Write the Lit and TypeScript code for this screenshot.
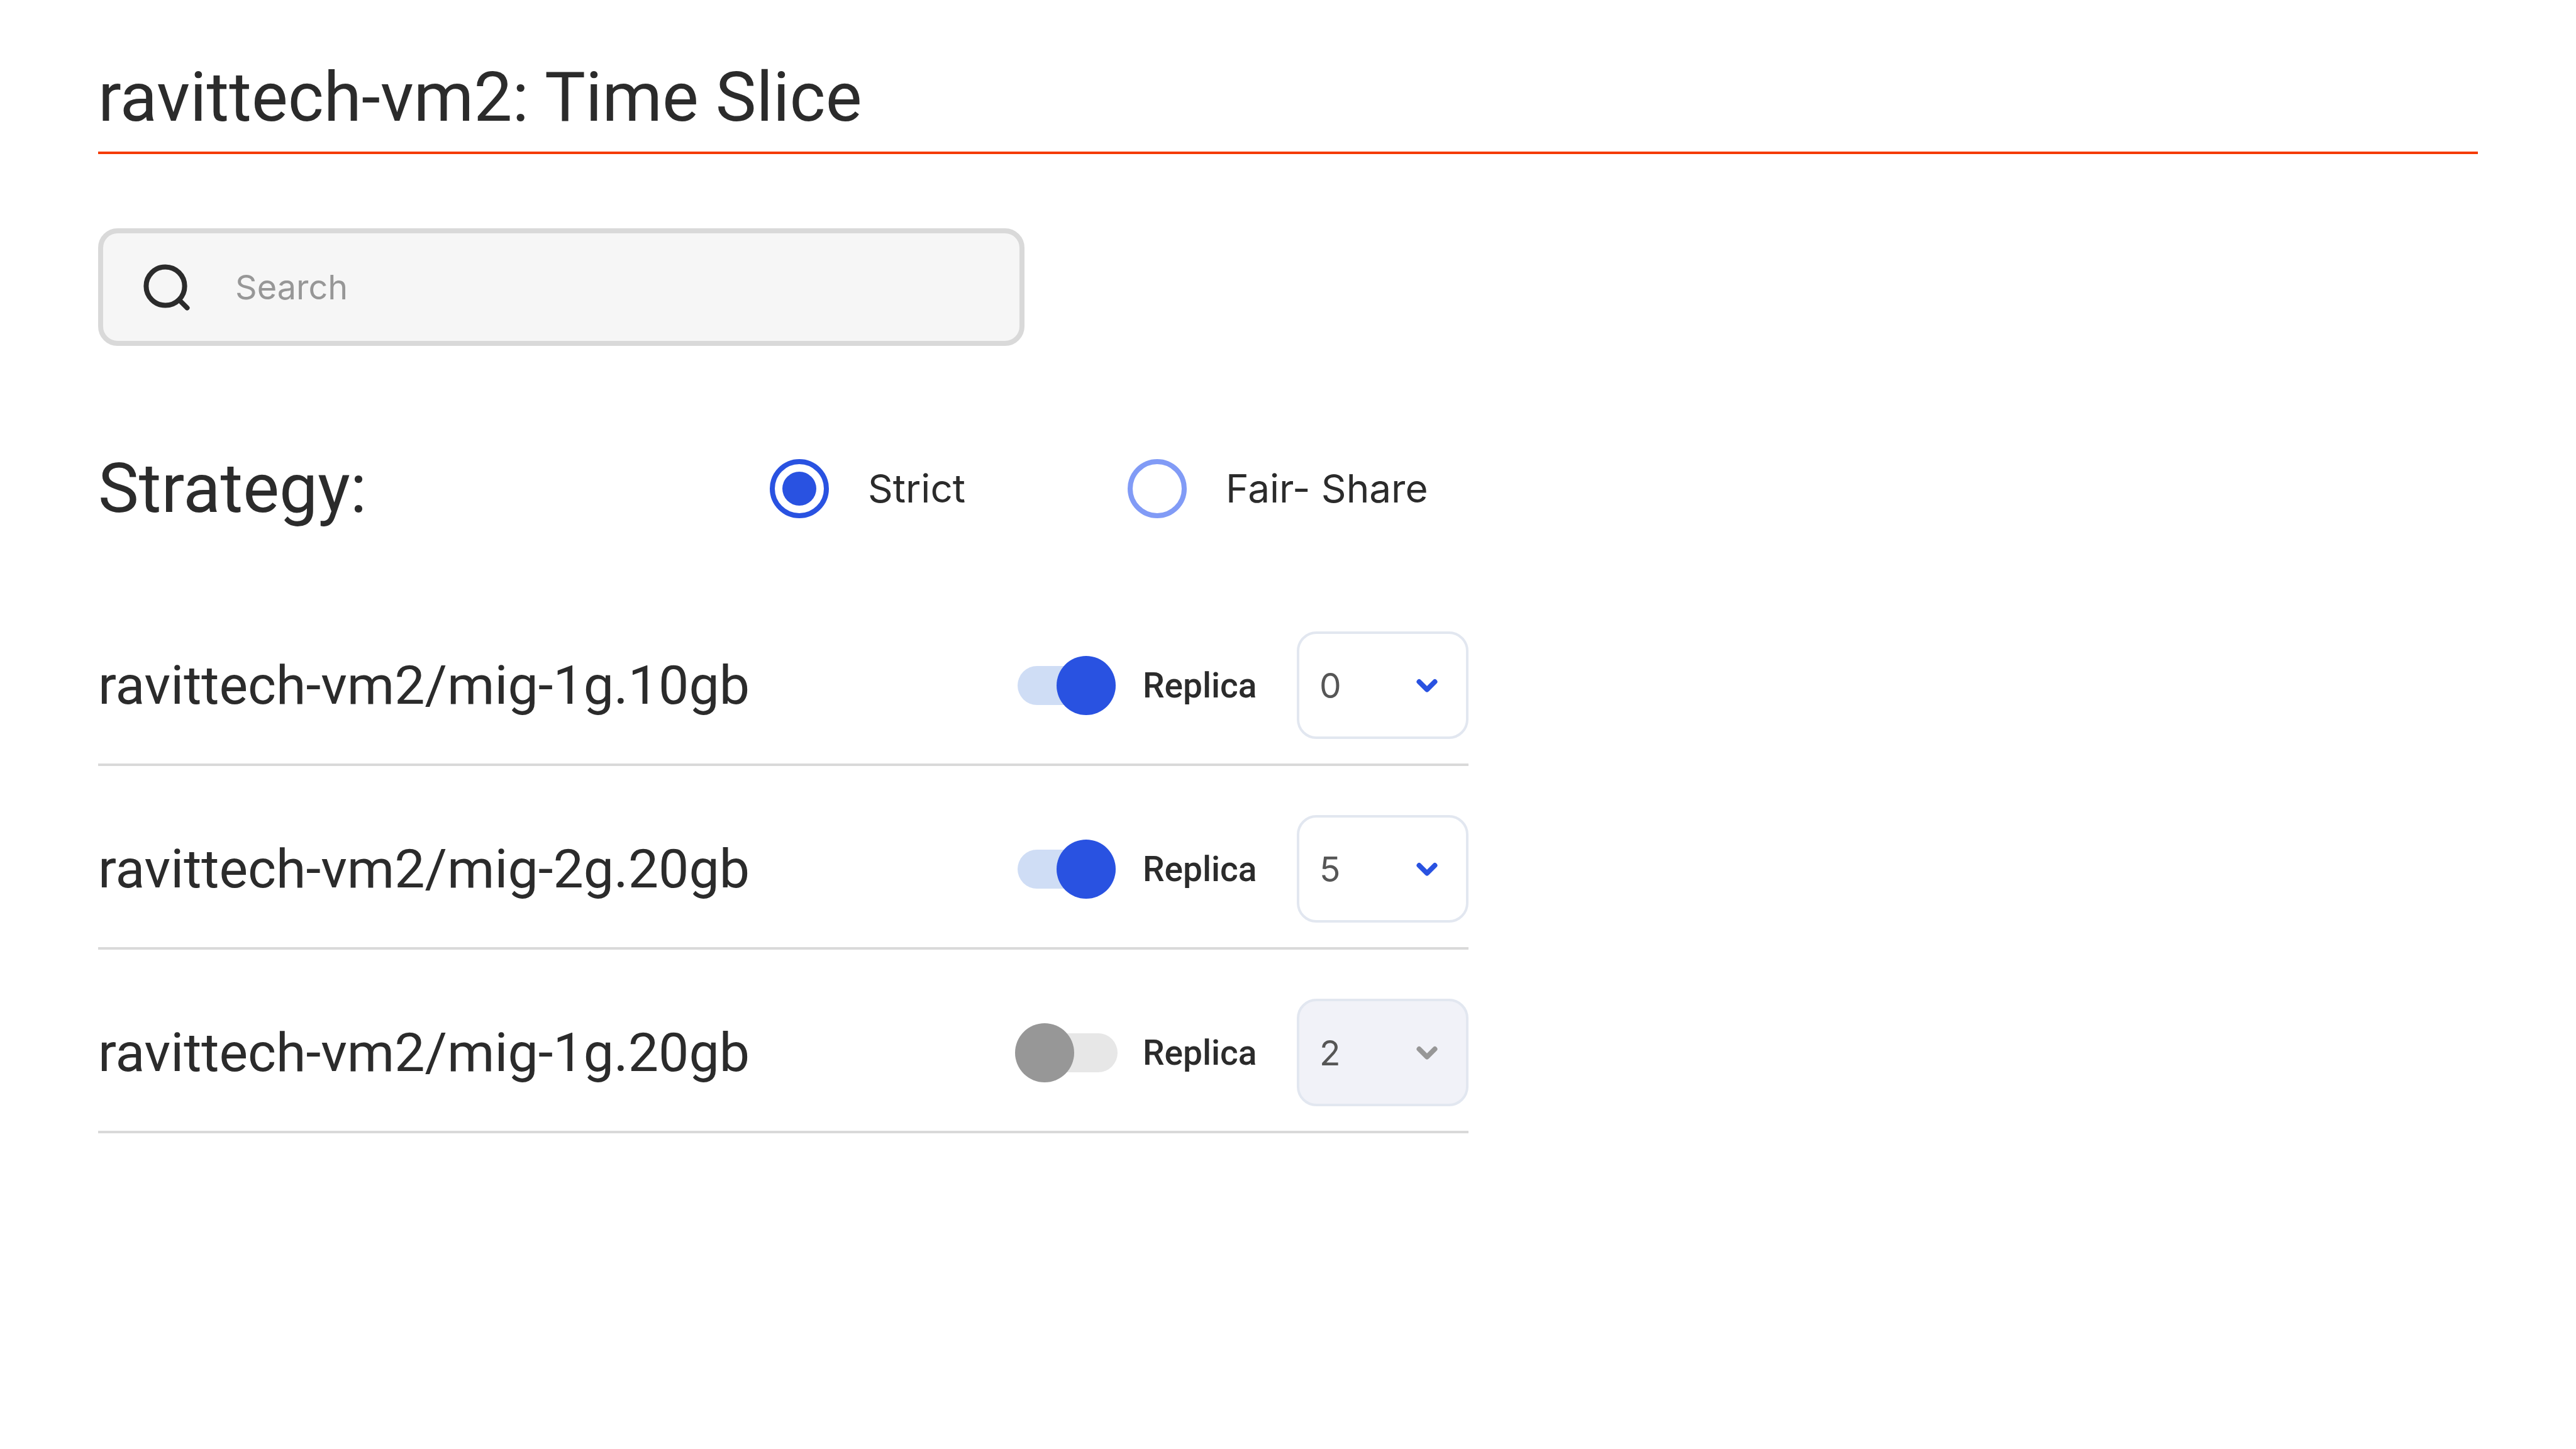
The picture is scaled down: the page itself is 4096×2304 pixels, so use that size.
import { LitElement, html, css, svg } from "lit";
import { customElement, state } from "lit/decorators.js";

interface Profile {
  name: string;
  enabled: boolean;
  replicas: number;
}

@customElement("app-root")
export class AppRoot extends LitElement {
  @state() private strategy = "strict";
  @state() private profiles: Profile[] = [
    { name: "ravittech-vm2/mig-1g.10gb", enabled: true, replicas: 0 },
    { name: "ravittech-vm2/mig-2g.20gb", enabled: true, replicas: 5 },
    { name: "ravittech-vm2/mig-1g.20gb", enabled: false, replicas: 2 },
  ];

  static styles = css`
    :host {
      display: block;
      min-height: 100vh;
      box-sizing: border-box;
      padding: 91px 156px;
      background: #ffffff;
      color: #2b2b2b;
      font-family: Roboto, "Liberation Sans", sans-serif;
    }
    * {
      box-sizing: border-box;
    }
    .title,
    .legend {
      margin: 0;
      font-size: 109px;
      line-height: 128px;
      font-weight: 400;
    }
    .title {
      padding-bottom: 22px;
      border-bottom: 4px solid #f53b03;
    }
    .search {
      display: flex;
      align-items: center;
      gap: 62px;
      width: 1473px;
      max-width: 100%;
      height: 187px;
      margin-top: 118px;
      padding: 0 54px;
      border: 8px solid #d9d9d9;
      border-radius: 31px;
      background: #f6f6f6;
    }
    .search-icon {
      flex: none;
      width: 94px;
      height: 94px;
    }
    .search-input {
      flex: 1;
      min-width: 0;
      padding: 0;
      border: 0;
      outline: 0;
      background: none;
      color: #2b2b2b;
      font: 400 54px/66px Inter, sans-serif;
    }
    .search-input::placeholder {
      color: #979797;
      opacity: 1;
    }
    .strategy {
      display: flex;
      align-items: center;
      margin-top: 163px;
    }
    .legend {
      flex: none;
      width: 1068px;
    }
    .options {
      display: flex;
      gap: 258px;
    }
    .option {
      display: flex;
      align-items: center;
      gap: 62px;
      font: 400 62px/78px Inter, sans-serif;
    }
    .radio {
      appearance: none;
      display: grid;
      place-items: center;
      width: 94px;
      height: 94px;
      margin: 0;
      border: 8px solid #819bf6;
      border-radius: 50%;
    }
    .radio:checked {
      border-color: #2952e1;
    }
    .radio:checked::before {
      content: "";
      width: 54px;
      height: 54px;
      border-radius: 50%;
      background: #2952e1;
    }
    .profiles {
      width: 2179px;
      max-width: 100%;
      margin: 85px 0 0;
      padding: 0;
      list-style: none;
    }
    .profile {
      display: flex;
      align-items: center;
      height: 292px;
      padding-top: 78px;
      padding-bottom: 39px;
      border-bottom: 4px solid #d9d9d9;
    }
    .name {
      flex: 1;
      font-size: 86px;
      line-height: 100px;
    }
    .toggle {
      appearance: none;
      display: flex;
      align-items: center;
      width: 156px;
      height: 62px;
      margin: 0 40px 0 0;
      border-radius: 31px;
      background: #e7e7e7;
    }
    .toggle::before {
      content: "";
      flex: none;
      width: 94px;
      height: 94px;
      margin-left: -7px;
      border-radius: 50%;
      background: #979797;
    }
    .toggle:checked {
      justify-content: flex-end;
      margin-right: 43px;
      background: #cfddf5;
    }
    .toggle:checked::before {
      background: #2952e1;
    }
    .replica {
      display: flex;
      align-items: center;
      width: 518px;
      justify-content: space-between;
      font-size: 55px;
      line-height: 64px;
      font-weight: 500;
    }
    .picker {
      display: grid;
      width: 273px;
      height: 171px;
    }
    .select {
      appearance: none;
      grid-area: 1 / 1;
      padding: 0 32px;
      border: 4px solid #e2e7f0;
      border-radius: 31px;
      background: #ffffff;
      color: #565656;
      opacity: 1;
      font: 400 55px/66px Inter, sans-serif;
    }
    .select:disabled {
      background: #f1f2f8;
    }
    .chevron {
      grid-area: 1 / 1;
      place-self: center end;
      width: 48px;
      height: 48px;
      margin-right: 42px;
      fill: none;
      stroke: #2952e1;
      pointer-events: none;
    }
    .select:disabled + .chevron {
      stroke: #979797;
    }
  `;

  private updateProfile(index: number, change: Partial<Profile>) {
    this.profiles = this.profiles.map((p, i) => (i === index ? { ...p, ...change } : p));
  }

  private renderOption(value: string, label: string) {
    return html`<label class="option">
      <input
        class="radio"
        type="radio"
        name="strategy"
        .value=${value}
        .checked=${this.strategy === value}
        @change=${() => (this.strategy = value)}
      />
      <span>${label}</span>
    </label>`;
  }

  private renderProfile(p: Profile, i: number) {
    return html`<li class="profile">
      <label class="name" for="toggle-${i}">${p.name}</label>
      <input
        class="toggle"
        type="checkbox"
        role="switch"
        id="toggle-${i}"
        .checked=${p.enabled}
        @change=${(e: Event) => this.updateProfile(i, { enabled: (e.target as HTMLInputElement).checked })}
      />
      <div class="replica">
        <label for="replica-${i}">Replica</label>
        <div class="picker">
          <select
            class="select"
            id="replica-${i}"
            ?disabled=${!p.enabled}
            @change=${(e: Event) => this.updateProfile(i, { replicas: Number((e.target as HTMLSelectElement).value) })}
          >
            ${[0, 1, 2, 3, 4, 5, 6, 7].map(
              (n) => html`<option value=${n} ?selected=${n === p.replicas}>${n}</option>`
            )}
          </select>
          <svg class="chevron" viewBox="0 0 48 48" aria-hidden="true">
            ${svg`<path d="M11.5 18 L24 30.5 L36.5 18" stroke-width="8" stroke-linecap="round" stroke-linejoin="round" />`}
          </svg>
        </div>
      </div>
    </li>`;
  }

  render() {
    return html`
      <h1 class="title">ravittech-vm2: Time Slice</h1>
      <div class="search">
        <svg class="search-icon" viewBox="0 0 94 94" fill="none" stroke="#2b2b2b" stroke-width="8" stroke-linecap="round" aria-hidden="true">
          <circle cx="45" cy="45" r="30.6" />
          <path d="M67 67 L79.5 79.5" />
        </svg>
        <input class="search-input" type="search" placeholder="Search" aria-label="Search" />
      </div>
      <div class="strategy" role="radiogroup" aria-labelledby="strategy-label">
        <h2 class="legend" id="strategy-label">Strategy:</h2>
        <div class="options">
          ${this.renderOption("strict", "Strict")} ${this.renderOption("fair-share", "Fair- Share")}
        </div>
      </div>
      <ul class="profiles">
        ${this.profiles.map((p, i) => this.renderProfile(p, i))}
      </ul>
    `;
  }
}
